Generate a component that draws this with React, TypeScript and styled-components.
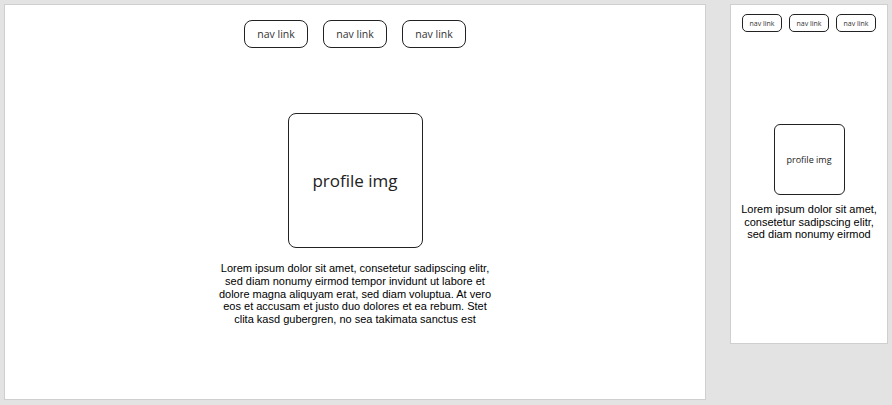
import React from "react";
import styled, { createGlobalStyle } from "styled-components";

const Global = createGlobalStyle`
  html, body { margin: 0; padding: 0; background: #e3e3e3; }
  body { width: 892px; height: 405px; overflow: hidden; }
`;

const Stage = styled.div`
  display: flex;
  align-items: flex-start;
  gap: 24px;
  padding: 4px;
`;

const Frame = styled.div<{ $w: number; $h: number; $pad: number }>`
  box-sizing: border-box;
  width: ${(p) => p.$w}px;
  height: ${(p) => p.$h}px;
  background: #fff;
  border: 1px solid #cfcfcf;
  display: flex;
  flex-direction: column;
  align-items: center;
  padding-top: ${(p) => p.$pad}px;
  overflow: hidden;
`;

const Nav = styled.nav<{ $gap: number }>`
  display: flex;
  gap: ${(p) => p.$gap}px;
`;

const NavLink = styled.a<{ $small?: boolean }>`
  box-sizing: border-box;
  display: flex;
  align-items: center;
  justify-content: center;
  width: ${(p) => (p.$small ? 40 : 64)}px;
  height: ${(p) => (p.$small ? 18 : 28)}px;
  border: ${(p) => (p.$small ? 1.3 : 1.5)}px solid #222;
  border-radius: ${(p) => (p.$small ? 5 : 8)}px;
  font-family: "Open Sans", "Noto Sans", sans-serif;
  font-size: ${(p) => (p.$small ? 7 : 10.5)}px;
  color: #333;
  text-decoration: none;
`;

const Profile = styled.div<{ $size: number; $gap: number; $font: number }>`
  box-sizing: border-box;
  width: ${(p) => p.$size}px;
  height: ${(p) => p.$size}px;
  margin-top: ${(p) => p.$gap}px;
  border: 1.5px solid #222;
  border-radius: ${(p) => (p.$size > 100 ? 8 : 6)}px;
  display: flex;
  align-items: center;
  justify-content: center;
  font-family: "Open Sans", "Noto Sans", sans-serif;
  font-size: ${(p) => p.$font}px;
  color: #222;
`;

const Text = styled.p<{ $w: number; $font: number; $lh: number; $gap: number }>`
  margin: ${(p) => p.$gap}px 0 0;
  width: ${(p) => p.$w}px;
  text-align: center;
  font-family: "Liberation Sans", Arial, sans-serif;
  font-size: ${(p) => p.$font}px;
  line-height: ${(p) => p.$lh}px;
  color: #000;
`;

const links = ["nav link", "nav link", "nav link"];

export default function App() {
  return (
    <>
      <Global />
      <Stage>
        <Frame $w={702} $h={396} $pad={15}>
          <Nav $gap={15}>
            {links.map((l, i) => (
              <NavLink key={i} href="#">{l}</NavLink>
            ))}
          </Nav>
          <Profile $size={135} $gap={65} $font={17}>profile img</Profile>
          <Text $w={278} $font={11} $lh={12.8} $gap={14}>
            Lorem ipsum dolor sit amet, consetetur sadipscing elitr, sed diam nonumy eirmod tempor
            invidunt ut labore et dolore magna aliquyam erat, sed diam voluptua. At vero eos et
            accusam et justo duo dolores et ea rebum. Stet clita kasd gubergren, no sea takimata
            sanctus est
          </Text>
        </Frame>
        <Frame $w={158} $h={340} $pad={9}>
          <Nav $gap={7}>
            {links.map((l, i) => (
              <NavLink key={i} href="#" $small>{l}</NavLink>
            ))}
          </Nav>
          <Profile $size={71} $gap={92} $font={9}>profile img</Profile>
          <Text $w={150} $font={11} $lh={12.5} $gap={8}>
            Lorem ipsum dolor sit amet, consetetur sadipscing elitr, sed diam nonumy eirmod
          </Text>
        </Frame>
      </Stage>
    </>
  );
}
